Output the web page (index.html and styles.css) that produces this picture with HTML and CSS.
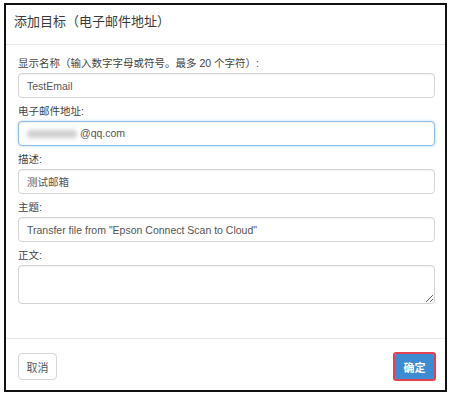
FILE: index.html
```html
<!DOCTYPE html>
<html lang="zh-CN">
<head>
    <meta charset="UTF-8">
    <meta name="viewport" content="width=device-width, initial-scale=1.0">
    <title>添加目标</title>
    <link rel="stylesheet" href="styles.css">
</head>
<body>
    <div class="modal">
        <div class="modal-header">
            <h4 class="modal-title">添加目标（电子邮件地址）</h4>
        </div>
        <div class="modal-body">
            <div class="formGroup">
                <label for="name">显示名称（输入数字字母或符号。最多 20 个字符）:</label>
                <input type="text" id="name" class="formControl" value="TestEmail">
            </div>
            <div class="formGroup">
                <label for="email">电子邮件地址:</label>
                <div class="formControl focused" id="email">
                    <span class="masked"></span>@qq.com
                </div>
            </div>
            <div class="formGroup">
                <label for="desc">描述:</label>
                <input type="text" id="desc" class="formControl" value="测试邮箱">
            </div>
            <div class="formGroup">
                <label for="subject">主题:</label>
                <input type="text" id="subject" class="formControl" value="Transfer file from &quot;Epson Connect Scan to Cloud&quot;">
            </div>
            <div class="formGroup last">
                <label for="body">正文:</label>
                <textarea id="body" class="formControl textArea"></textarea>
            </div>
        </div>
        <div class="modal-footer">
            <button class="btn btnCancel">取消</button>
            <span class="highlight">
                <button class="btn btnOk">确定</button>
            </span>
        </div>
    </div>
</body>
</html>
```

FILE: styles.css
```css
body {
    margin: 0;
    padding: 0;
    background: #fff;
    font-family: "Liberation Sans", "Noto Sans CJK SC", sans-serif;
}

.modal {
    margin: 3px 4px 0 4px;
    width: 439px;
    border: 2px solid #111;
    background: #fff;
}

.modal-header {
    padding: 8px 12px 13px 8px;
    border-bottom: 1px solid #e8e8e8;
}

.modal-title {
    margin: 0;
    font-size: 13px;
    font-weight: normal;
    line-height: 18px;
    color: #3a3a3a;
}

.modal-body {
    padding: 11px 10px 34px 12px;
}

.formGroup {
    margin-bottom: 6px;
}

.formGroup.last {
    margin-bottom: 0;
}

label {
    display: block;
    font-size: 10.5px;
    line-height: 15px;
    color: #444;
    margin-bottom: 2px;
}

.formControl {
    display: block;
    box-sizing: border-box;
    width: 100%;
    height: 25px;
    padding: 0 8px;
    font-family: "Liberation Sans", "Noto Sans CJK SC", sans-serif;
    font-size: 10.5px;
    line-height: 23px;
    color: #555;
    border: 1px solid #d4d4d4;
    border-radius: 4px;
    background: #fff;
    box-shadow: inset 0 1px 1px rgba(0, 0, 0, 0.05);
    margin: 0;
}

.focused {
    border-color: #8dbde8;
    box-shadow: inset 0 1px 1px rgba(0, 0, 0, 0.05), 0 0 3px rgba(102, 175, 233, 0.5);
}

.masked {
    display: inline-block;
    width: 50px;
    height: 8px;
    margin-right: 3px;
    vertical-align: -1px;
    background: #cfcfcf;
    border-radius: 3px;
    filter: blur(2px);
}

.textArea {
    height: 39px;
    resize: vertical;
}

.modal-footer {
    display: flex;
    justify-content: space-between;
    align-items: center;
    padding: 13px 9px 9px 12px;
    border-top: 1px solid #e8e8e8;
}

.btn {
    font-family: "Liberation Sans", "Noto Sans CJK SC", sans-serif;
    font-size: 11px;
    border-radius: 4px;
    margin: 0;
    cursor: pointer;
}

.btnCancel {
    width: 39px;
    height: 27px;
    padding: 0;
    background: #fff;
    color: #555;
    border: 1px solid #d6d6d6;
}

.highlight {
    display: block;
    border: 2px solid #e2414f;
    border-radius: 3px;
    line-height: 0;
}

.btnOk {
    width: 39px;
    height: 25px;
    padding: 0;
    border: none;
    border-radius: 1px;
    background: #3d8bd0;
    color: #fff;
    font-weight: bold;
}
```
